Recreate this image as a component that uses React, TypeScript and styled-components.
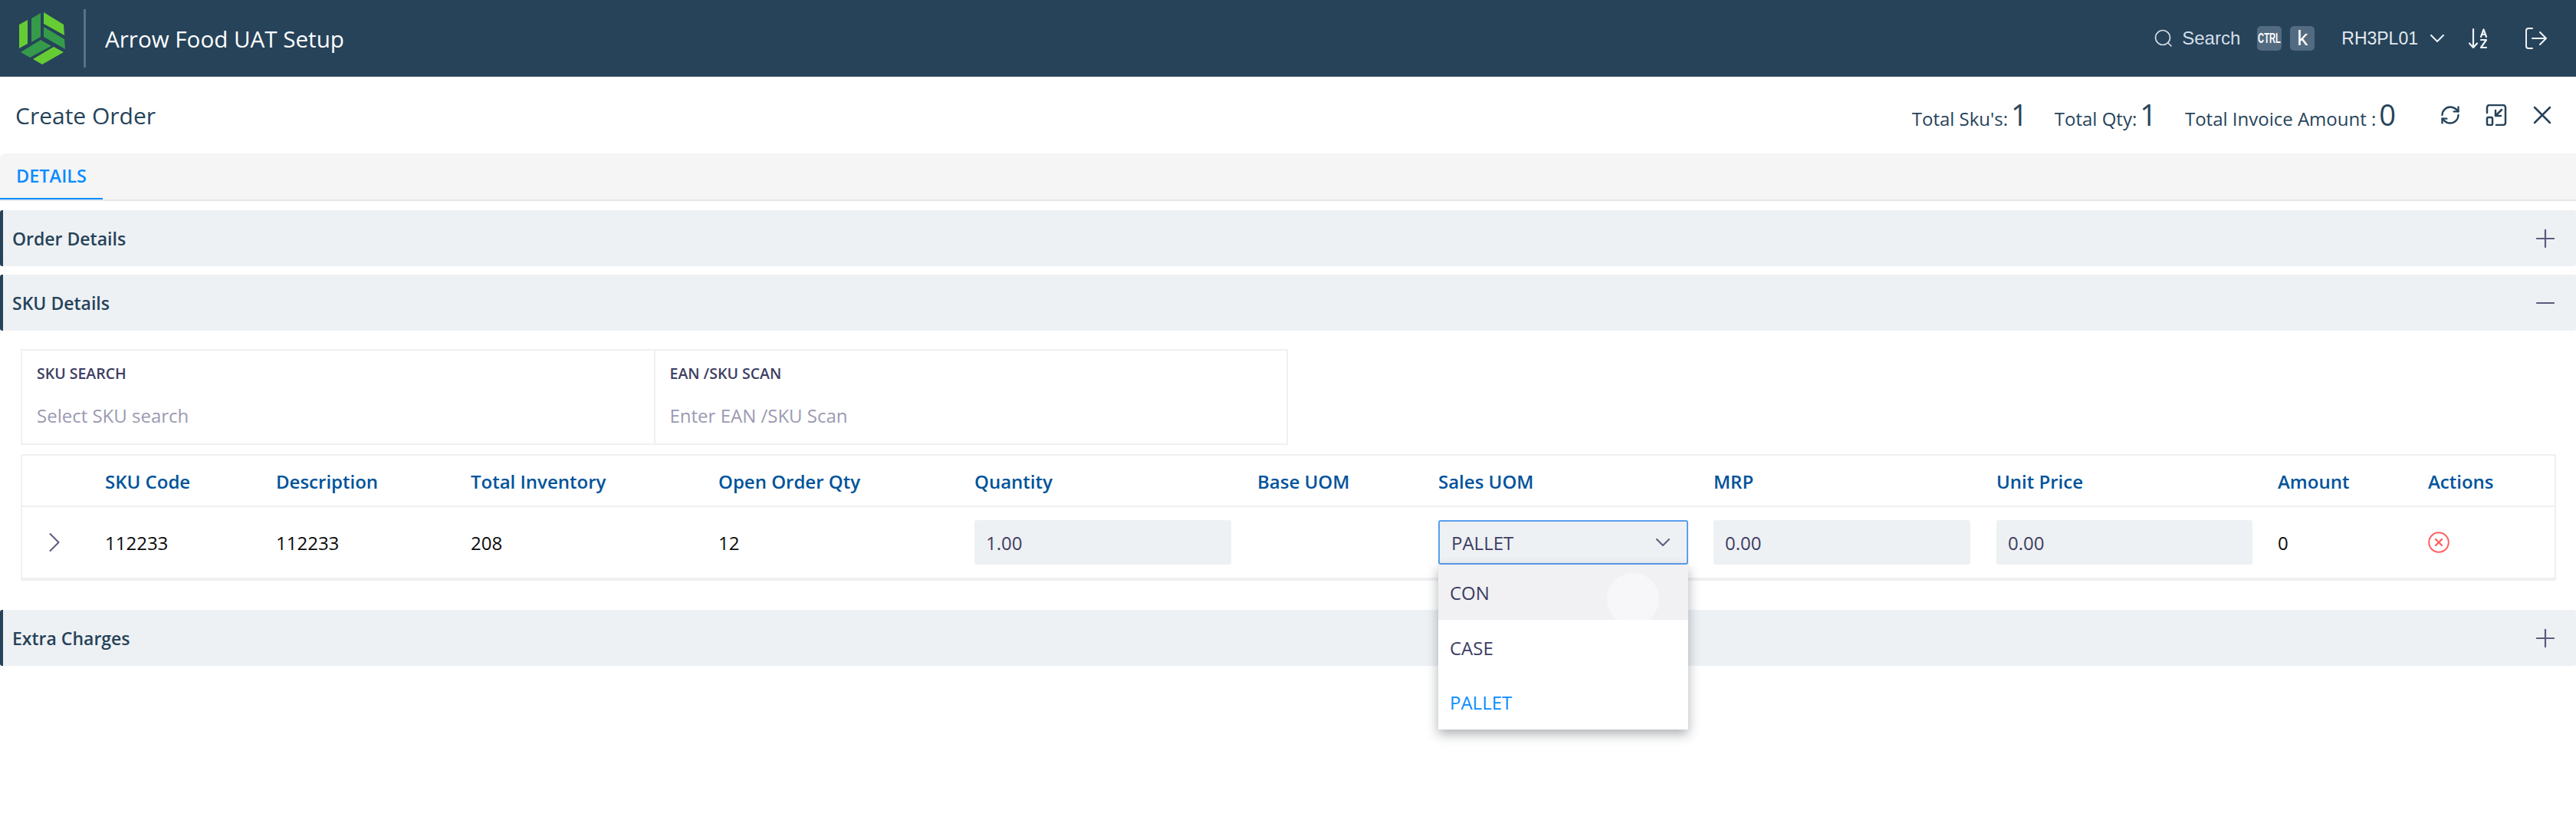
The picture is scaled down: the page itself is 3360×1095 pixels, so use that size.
import React from "react";
import styled, { createGlobalStyle } from "styled-components";
import { ChevronRight, Minus, Plus, RefreshCw } from "lucide-react";

const GlobalStyle = createGlobalStyle`
  html, body {
    margin: 0;
    padding: 0;
    background: #fff;
    font-family: "Open Sans", "Noto Sans", sans-serif;
  }
  * { box-sizing: border-box; }
`;

const COLUMNS = "108px 223px 254px 323px 334px 369px 236px 359px 369px 367px 196px 1fr";

const S = {
  Page: styled.div`
    width: 3360px;
    height: 1095px;
    overflow: hidden;
  `,
  Header: styled.header`
    display: flex;
    align-items: center;
    height: 100px;
    padding: 0 38px 0 24px;
    background: #26435a;
    color: #fff;
  `,
  Logo: styled.svg`
    width: 62px;
    height: 69px;
  `,
  Divider: styled.div`
    width: 3px;
    height: 76px;
    margin: 0 25px 0 23px;
    background: #56728c;
  `,
  AppName: styled.div`
    flex: 1;
    font-size: 29.6px;
    font-weight: 400;
    color: #fff;
  `,
  SearchLabel: styled.span`
    margin-left: 12px;
    font-family: "Liberation Sans", Arial, sans-serif;
    font-size: 24px;
    color: #d5dfe8;
  `,
  KeyCap: styled.span<{ $small?: boolean }>`
    display: flex;
    align-items: center;
    justify-content: center;
    width: 32px;
    height: 32px;
    margin-left: ${(p) => (p.$small ? "22px" : "11px")};
    border-radius: 5px;
    background: #536b80;
    font-family: "Liberation Sans", Arial, sans-serif;
    font-size: ${(p) => (p.$small ? "18px" : "28px")};
    font-weight: ${(p) => (p.$small ? 700 : 400)};
    color: #fff;
  `,
  KeyText: styled.span`
    display: inline-block;
    transform: scaleX(0.62);
  `,
  UserName: styled.span`
    margin-left: 35px;
    font-family: "Liberation Sans", Arial, sans-serif;
    font-size: 23px;
    color: #e4e9ee;
  `,
  HeaderIcon: styled.svg<{ $gap: number }>`
    margin-left: ${(p) => p.$gap}px;
    fill: none;
    stroke: #eef2f5;
    stroke-width: 2;
    stroke-linecap: round;
    stroke-linejoin: round;
  `,
  SearchIcon: styled.svg`
    fill: none;
    stroke: #d5dfe8;
    stroke-width: 1.7;
    stroke-linecap: round;
  `,
  TitleBar: styled.div`
    display: flex;
    align-items: center;
    height: 100px;
    padding: 0 32px 0 20px;
    color: #26435a;
  `,
  Title: styled.h1`
    flex: 1;
    margin: 0;
    font-size: 30px;
    font-weight: 500;
  `,
  Stat: styled.div<{ $gap: number }>`
    display: flex;
    align-items: baseline;
    gap: 4px;
    margin-right: ${(p) => p.$gap}px;
    font-size: 24px;
    font-weight: 400;
  `,
  StatValue: styled.span`
    font-size: 38px;
    font-weight: 500;
    line-height: 1;
  `,
  TitleIcon: styled.svg<{ $gap: number }>`
    margin-left: ${(p) => p.$gap}px;
    fill: none;
    stroke: #26435a;
    stroke-width: 2.5;
    stroke-linecap: round;
    stroke-linejoin: round;
  `,
  TabBar: styled.div`
    height: 62px;
    border-top-left-radius: 6px;
    border-bottom: 2px solid #e3e8ec;
    background: #f5f5f5;
  `,
  Tab: styled.div`
    display: flex;
    align-items: center;
    width: 134px;
    height: 60px;
    padding-left: 21px;
    border-bottom: 2px solid #0a8cff;
    font-size: 23.5px;
    font-weight: 600;
    color: #0a8cff;
  `,
  Section: styled.section<{ $top: number }>`
    display: flex;
    align-items: center;
    justify-content: space-between;
    height: 73px;
    margin-top: ${(p) => p.$top}px;
    padding: 0 21px 0 12px;
    border-left: 4px solid #26435a;
    border-radius: 3px;
    background: #eef1f4;
    font-size: 23px;
    font-weight: 600;
    color: #26435a;
    svg { color: #5b5b7d; }
  `,
  Body: styled.div`
    padding: 24px 26px 0 27px;
  `,
  SearchRow: styled.div`
    display: flex;
    width: 1653px;
    height: 125px;
    border: 2px solid #eef0f3;
  `,
  Field: styled.div`
    flex: 1;
    padding: 16px 0 0 19px;
    & + & { border-left: 2px solid #eef0f3; }
  `,
  FieldLabel: styled.div`
    font-size: 19.5px;
    font-weight: 600;
    color: #3d3d63;
  `,
  FieldHint: styled.div`
    margin-top: 25px;
    font-size: 24px;
    color: #9a9ab2;
  `,
  Table: styled.div`
    margin-top: 12px;
    border: 2px solid #f0f0f1;
    border-bottom-width: 4px;
  `,
  HeadRow: styled.div`
    display: grid;
    grid-template-columns: ${COLUMNS};
    align-items: center;
    height: 67px;
    padding-top: 2px;
    border-bottom: 2px solid #f0f0f1;
    font-size: 24px;
    font-weight: 600;
    color: #00539b;
  `,
  DataRow: styled.div`
    display: grid;
    grid-template-columns: ${COLUMNS};
    align-items: center;
    height: 92px;
    font-size: 24px;
    color: #0b0b0b;
  `,
  Expand: styled.div`
    display: flex;
    padding-left: 20px;
    color: #5b5b7d;
  `,
  ReadOnly: styled.div<{ $width: number }>`
    display: flex;
    align-items: center;
    width: ${(p) => p.$width}px;
    height: 58px;
    padding-left: 15px;
    border-radius: 3px;
    background: #eef1f4;
    color: #3d3d63;
  `,
  SelectWrap: styled.div`
    position: relative;
    width: 326px;
  `,
  Select: styled.div`
    display: flex;
    align-items: center;
    justify-content: space-between;
    height: 58px;
    padding: 0 22px 0 15px;
    border: 2px solid #5a9eee;
    border-radius: 3px;
    background: #eef1f4;
    color: #3d3d63;
  `,
  SelectArrow: styled.svg`
    fill: none;
    stroke: #5b5b7d;
    stroke-width: 2;
    stroke-linecap: round;
    stroke-linejoin: round;
  `,
  Menu: styled.div`
    position: absolute;
    top: 58px;
    left: 0;
    z-index: 5;
    width: 326px;
    background: #fff;
    box-shadow: 0 6px 14px rgba(40, 50, 60, 0.38);
  `,
  MenuItem: styled.div<{ $active?: boolean; $hover?: boolean }>`
    position: relative;
    display: flex;
    align-items: center;
    height: 71.5px;
    padding: 2px 0 0 15px;
    overflow: hidden;
    background: ${(p) => (p.$hover ? "#f1f1f3" : "#fff")};
    color: ${(p) => (p.$active ? "#0a8cff" : "#3d3d63")};
  `,
  Ripple: styled.span`
    position: absolute;
    top: 11px;
    left: 220px;
    width: 68px;
    height: 68px;
    border-radius: 50%;
    background: #f7f7f9;
  `,
  RemoveIcon: styled.svg`
    display: block;
    fill: none;
    stroke: #ff6161;
    stroke-width: 2;
    stroke-linecap: round;
  `,
};

const columns = [
  "",
  "SKU Code",
  "Description",
  "Total Inventory",
  "Open Order Qty",
  "Quantity",
  "Base UOM",
  "Sales UOM",
  "MRP",
  "Unit Price",
  "Amount",
  "Actions",
];

function App() {
  return (
    <S.Page>
      <GlobalStyle />
      <S.Header>
        <S.Logo viewBox="24 16 62 69">
          <path d="M25 32 36 26 36 57 25 63Z" fill="#66cc33" />
          <path d="M41 24 53 17 53 48 41 55Z" fill="#359a4a" />
          <path d="M57 16 83 32 84 46 57 31Z" fill="#66cc33" />
          <path d="M57 35 84 51 85 64 57 48Z" fill="#359a4a" />
          <path d="M53 52 67 60 39 75 27 68Z" fill="#359a4a" />
          <path d="M70 61 83 68 55 84 43 77Z" fill="#66cc33" />
        </S.Logo>
        <S.Divider />
        <S.AppName>Arrow Food UAT Setup</S.AppName>
        <S.SearchIcon width="24" height="24" viewBox="0 0 24 24">
          <circle cx="11" cy="11" r="9.500" />
          <path d="M18 18l4 4" />
        </S.SearchIcon>
        <S.SearchLabel>Search</S.SearchLabel>
        <S.KeyCap $small>
          <S.KeyText>CTRL</S.KeyText>
        </S.KeyCap>
        <S.KeyCap>k</S.KeyCap>
        <S.UserName>RH3PL01</S.UserName>
        <S.HeaderIcon $gap={16} width="18" height="11" viewBox="0 0 18 11">
          <path d="M1 1l8 8 8-8" />
        </S.HeaderIcon>
        <S.HeaderIcon $gap={32} width="25" height="28" viewBox="0 0 25 28">
          <path d="M6 2V26M1 20.500l5 5.500 5-5.500" strokeWidth="2.200" />
          <path d="M16 12l3.500-9.500 3.500 9.500M17 9h5M16 16h7l-7 10h7" strokeWidth="2.200" />
        </S.HeaderIcon>
        <S.HeaderIcon $gap={49} width="28" height="28" viewBox="0 0 28 28">
          <path d="M9 1H4a3 3 0 0 0-3 3v20a3 3 0 0 0 3 3h5M9 14h18M19 6l8 8-8 8" />
        </S.HeaderIcon>
      </S.Header>
      <S.TitleBar>
        <S.Title>Create Order</S.Title>
        <S.Stat $gap={35}>Total Sku&apos;s: <S.StatValue>1</S.StatValue></S.Stat>
        <S.Stat $gap={37}>Total Qty: <S.StatValue>1</S.StatValue></S.Stat>
        <S.Stat $gap={57}>Total Invoice Amount : <S.StatValue>0</S.StatValue></S.Stat>
        <RefreshCw size={28} color="#26435a" strokeWidth={2} />
        <S.TitleIcon $gap={32} width="28" height="28" viewBox="0 0 28 28">
          <path d="M2 11V4a3 3 0 0 1 3-3h18a3 3 0 0 1 3 3v20a3 3 0 0 1-3 3h-9" />
          <rect x="2" y="17" width="7" height="10" rx="1.500" />
          <path d="M21 7l-8 8M13 8v7h7" />
        </S.TitleIcon>
        <S.TitleIcon $gap={34} width="24" height="24" viewBox="0 0 24 24">
          <path d="M2 2l20 20M22 2L2 22" />
        </S.TitleIcon>
      </S.TitleBar>
      <S.TabBar>
        <S.Tab>DETAILS</S.Tab>
      </S.TabBar>
      <S.Section $top={12}>
        Order Details
        <Plus size={38} strokeWidth={1.4} />
      </S.Section>
      <S.Section $top={11}>
        SKU Details
        <Minus size={38} strokeWidth={1.4} />
      </S.Section>
      <S.Body>
        <S.SearchRow>
          <S.Field>
            <S.FieldLabel>SKU SEARCH</S.FieldLabel>
            <S.FieldHint>Select SKU search</S.FieldHint>
          </S.Field>
          <S.Field>
            <S.FieldLabel>EAN /SKU SCAN</S.FieldLabel>
            <S.FieldHint>Enter EAN /SKU Scan</S.FieldHint>
          </S.Field>
        </S.SearchRow>
        <S.Table>
          <S.HeadRow>
            {columns.map((column) => (
              <div key={column}>{column}</div>
            ))}
          </S.HeadRow>
          <S.DataRow>
            <S.Expand>
              <ChevronRight size={44} strokeWidth={1.1} />
            </S.Expand>
            <div>112233</div>
            <div>112233</div>
            <div>208</div>
            <div>12</div>
            <S.ReadOnly $width={335}>1.00</S.ReadOnly>
            <div />
            <S.SelectWrap>
              <S.Select>
                PALLET
                <S.SelectArrow width="18" height="11" viewBox="0 0 18 11">
                  <path d="M1 1l8 8 8-8" />
                </S.SelectArrow>
              </S.Select>
              <S.Menu>
                <S.MenuItem $hover>
                  CON
                  <S.Ripple />
                </S.MenuItem>
                <S.MenuItem>CASE</S.MenuItem>
                <S.MenuItem $active>PALLET</S.MenuItem>
              </S.Menu>
            </S.SelectWrap>
            <S.ReadOnly $width={335}>0.00</S.ReadOnly>
            <S.ReadOnly $width={334}>0.00</S.ReadOnly>
            <div>0</div>
            <div>
              <S.RemoveIcon width="28" height="28" viewBox="0 0 28 28">
                <circle cx="14" cy="14" r="12.800" />
                <path d="M10 10l8 8M18 10l-8 8" strokeWidth="2.400" />
              </S.RemoveIcon>
            </div>
          </S.DataRow>
        </S.Table>
      </S.Body>
      <S.Section $top={38}>
        Extra Charges
        <Plus size={38} strokeWidth={1.4} />
      </S.Section>
    </S.Page>
  );
}

export default App;
